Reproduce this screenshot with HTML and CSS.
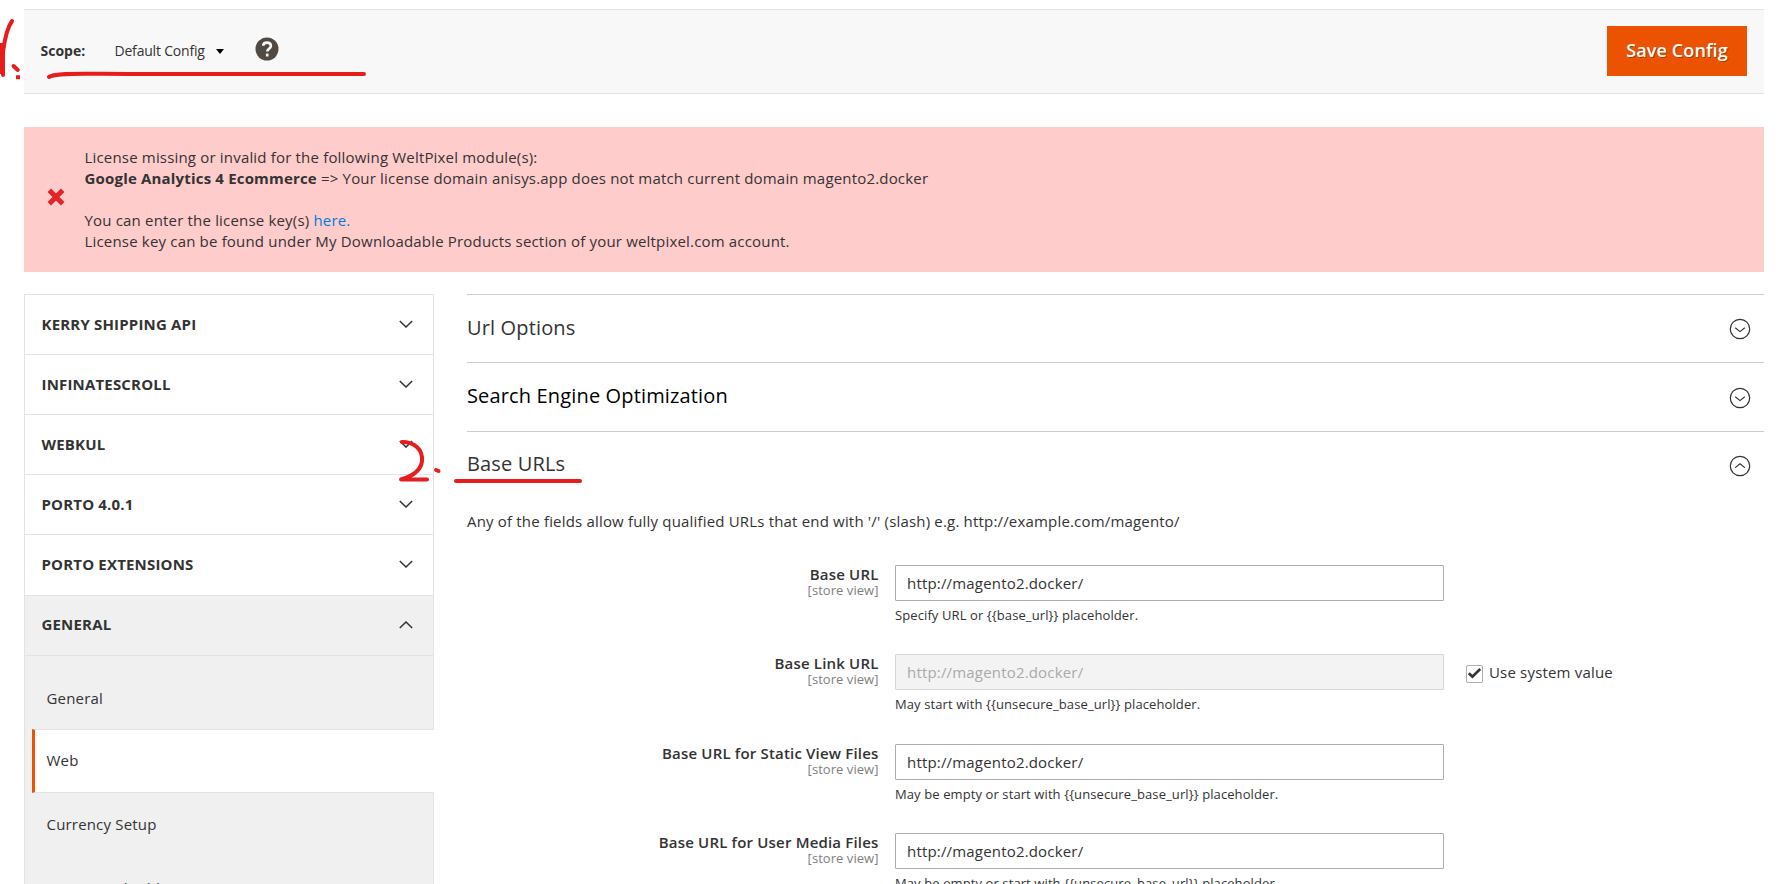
FILE: index.html
```html
<!DOCTYPE html>
<html lang="en">
<head>
<meta charset="utf-8">
<title>Configuration</title>
<link rel="stylesheet" href="styles.css">
</head>
<body>
<svg width="0" height="0" class="defs">
  <symbol id="down" viewBox="0 0 14 8"><path d="M.8 1 7 7 13.200 1"/></symbol>
  <symbol id="up" viewBox="0 0 14 8"><path d="M.8 7 7 1 13.200 7"/></symbol>
  <symbol id="cdown" viewBox="0 0 22 22"><circle cx="11" cy="11" r="9.700"/><path d="M6.200 9.800 11 13.600 15.800 9.800"/></symbol>
  <symbol id="cup" viewBox="0 0 22 22"><circle cx="11" cy="11" r="9.700"/><path d="M6.200 12.600 11 8.800 15.800 12.600"/></symbol>
</svg>
<main class="page">
  <header class="toolbar">
    <span class="scope-label">Scope:</span>
    <span class="scope-value">Default Config</span>
    <span class="caret"></span>
    <svg class="help" viewBox="0 0 24 24"><circle cx="12" cy="12" r="11.500"/><path d="M8.200 8.800C8.300 6.700 9.900 5.600 12 5.600c2.200 0 3.900 1.200 3.900 3.300 0 2.700-3.600 2.900-3.600 5.500"/><path d="M12.200 16.600v2.900"/></svg>
    <button class="save">Save Config</button>
  </header>
  <section class="message">
    <svg class="cross" viewBox="0 0 18 18"><path d="M2.300 2.300 15.700 15.700M15.700 2.300 2.300 15.700"/></svg>
    <p class="message-text">License missing or invalid for the following WeltPixel module(s):<br><b>Google Analytics 4 Ecommerce</b> =&gt; Your license domain anisys.app does not match current domain magento2.docker<br><br>You can enter the license key(s) <a class="link">here.</a><br>License key can be found under My Downloadable Products section of your weltpixel.com account.</p>
  </section>
  <div class="columns">
    <nav class="sidebar">
      <div class="tab">KERRY SHIPPING API<svg class="chev"><use href="#down"/></svg></div>
      <div class="tab">INFINATESCROLL<svg class="chev"><use href="#down"/></svg></div>
      <div class="tab">WEBKUL<svg class="chev"><use href="#down"/></svg></div>
      <div class="tab">PORTO 4.0.1<svg class="chev"><use href="#down"/></svg></div>
      <div class="tab tab-last">PORTO EXTENSIONS<svg class="chev"><use href="#down"/></svg></div>
      <div class="tab tab-open">GENERAL<svg class="chev"><use href="#up"/></svg></div>
      <div class="items">
        <div class="item item-first">General</div>
        <div class="item item-active">Web</div>
        <div class="item item-after">Currency Setup</div>
        <div class="item">Store Email Addresses</div>
      </div>
    </nav>
    <div class="content">
      <h2 class="section">Url Options<svg class="toggle"><use href="#cdown"/></svg></h2>
      <h2 class="section section-hover">Search Engine Optimization<svg class="toggle"><use href="#cdown"/></svg></h2>
      <h2 class="section section-open">Base URLs<svg class="toggle"><use href="#cup"/></svg></h2>
      <p class="comment">Any of the fields allow fully qualified URLs that end with '/' (slash) e.g. http://example.com/magento/</p>
      <div class="fields">
        <div class="field">
          <div class="label">Base URL<span class="scope">[store view]</span></div>
          <div class="control"><div class="input">http://magento2.docker/</div><p class="note">Specify URL or {{base_url}} placeholder.</p></div>
        </div>
        <div class="field">
          <div class="label">Base Link URL<span class="scope">[store view]</span></div>
          <div class="control"><div class="input input-disabled">http://magento2.docker/</div><p class="note">May start with {{unsecure_base_url}} placeholder.</p></div>
          <div class="system"><span class="check"><svg class="tick" viewBox="0 0 15 16"><path d="M1.800 7.200 5.400 10.700 13.200 3"/></svg></span>Use system value</div>
        </div>
        <div class="field">
          <div class="label">Base URL for Static View Files<span class="scope">[store view]</span></div>
          <div class="control"><div class="input">http://magento2.docker/</div><p class="note">May be empty or start with {{unsecure_base_url}} placeholder.</p></div>
        </div>
        <div class="field">
          <div class="label">Base URL for User Media Files<span class="scope">[store view]</span></div>
          <div class="control"><div class="input">http://magento2.docker/</div><p class="note">May be empty or start with {{unsecure_base_url}} placeholder.</p></div>
        </div>
      </div>
    </div>
  </div>
</main>
<svg class="marks" viewBox="0 0 1777 884">
  <path d="M12 21C7 28 4.500 40 3 52V75M13.500 66 17.800 70"/>
  <path class="flat" d="M1.500 43V74M16 77.200H20"/>
  <path d="M49 77C55 73 75 74 100 73.700L130 74H364"/>
  <path d="M402 442C414 442 423 449 422 461 421 471 413 476 401 479.500H427M436 470 438.500 471"/>
  <path d="M456 481H580"/>
</svg>
</body>
</html>
```

FILE: styles.css
```css
* { box-sizing: border-box; }
body { margin: 0; height: 884px; overflow: hidden; background: #fff; font: 15px/21px "Open Sans", sans-serif; letter-spacing: .18px; color: #333; }
p, h2 { margin: 0; }
.defs { position: absolute; }
svg { fill: none; stroke: #333; flex: none; }
.page { padding: 9px 13px 0 24px; }
.toolbar { display: flex; align-items: center; height: 85px; padding: 0 17px 1px 16.500px; background: #f8f8f8; border-top: 1px solid #e3e3e3; border-bottom: 1px solid #e3e3e3; letter-spacing: 0; }
.scope-label { font-size: 14px; font-weight: 700; width: 74px; padding-bottom: 2px; }
.scope-value { font-size: 14px; letter-spacing: -.2px; padding-bottom: 2px; }
.caret { border: 4px solid transparent; border-top: 5px solid #000; border-bottom: 0; margin-left: 11.500px; }
.help { width: 24px; height: 24px; margin: -4px 0 0 31px; stroke: #f8f8f8; stroke-width: 2.600; }
.help circle { fill: #514943; stroke: none; }
.save { margin-left: auto; width: 140px; height: 50px; padding: 0 0 2px; border: 0; background: #eb5202; color: #fff; font: 600 18px "Open Sans", sans-serif; letter-spacing: .1px; text-shadow: 1px 1px 0 rgba(0,0,0,.25); }
.message { display: flex; height: 145px; margin-top: 33px; padding: 20px 0 0 23px; background: #fcc; }
.cross { width: 18px; height: 18px; margin: 41px 19.500px 0 0; stroke: #e22626; stroke-width: 5; }
.link { color: #007bdb; }
.columns { display: flex; margin-top: 22px; }
.sidebar { width: 410px; height: 600px; border-top: 1px solid #e3e3e3; }
.tab { display: flex; align-items: center; justify-content: space-between; height: 60px; padding: 0 20px 1px 16.500px; border: solid #e3e3e3; border-width: 0 1px 1px; font-weight: 700; }
.tab-last { height: 61px; padding-bottom: 2px; }
.tab-open { padding-bottom: 2px; background: #f0f0f0; }
.chev { width: 14px; height: 8px; stroke-width: 1.500; }
.items { padding: 0 0 0 7px; border-left: 1px solid #e3e3e3; background: #f0f0f0; }
.item { height: 63px; padding: 21px 0 0 14.500px; border-right: 1px solid #e3e3e3; }
.item-first { height: 73px; padding-top: 32px; }
.item-active { height: 64px; padding: 20px 0 0 11.500px; background: #fff; border: solid #e3e3e3; border-width: 1px 0; border-left: 3px solid #eb5202; font-weight: 500; }
.item-after { height: 64px; }
.content { flex: 1; margin-left: 33px; }
.section { display: flex; justify-content: space-between; height: 68px; padding: 20px 13px 0 0; border-top: 1px solid #ccc; font-size: 20px; line-height: 26px; font-weight: 500; letter-spacing: .15px; }
.section-hover { height: 69px; color: #000; }
.section-open { padding-top: 19px; }
.toggle { width: 22px; height: 22px; margin-top: 3px; stroke-width: 1.200; }
.section-hover .toggle, .section-open .toggle { margin-top: 4px; }
.comment { margin-top: 12px; }
.fields { margin-top: 33px; }
.field { display: flex; height: 89.300px; }
.label { width: 411.500px; margin-top: -1px; text-align: right; font-weight: 600; line-height: 20px; }
.scope { display: block; font-size: 13px; line-height: 12px; font-weight: 400; color: #808080; letter-spacing: .05px; }
.control { width: 549px; margin-left: 16.500px; }
.input { height: 36px; padding: 7px 11px; border: 1px solid #adadad; border-radius: 1px; line-height: 20px; }
.input-disabled { background: #f3f3f3; border-color: #d6d6d6; color: #aaa; }
.note { margin-top: 5px; font-size: 13px; line-height: 18px; letter-spacing: .1px; }
.system { display: flex; margin: 8px 0 0 22px; line-height: 20px; }
.check { width: 17px; height: 18px; margin: 3px 6px 0 0; border: 1px solid #adadad; border-radius: 2px; }
.tick { display: block; width: 15px; height: 16px; stroke-width: 2.600; }
.marks { position: absolute; left: 0; top: 0; width: 1777px; height: 884px; stroke: #e71d1d; stroke-width: 4; stroke-linecap: round; stroke-linejoin: round; pointer-events: none; }
.flat { stroke-linecap: butt; }
```
